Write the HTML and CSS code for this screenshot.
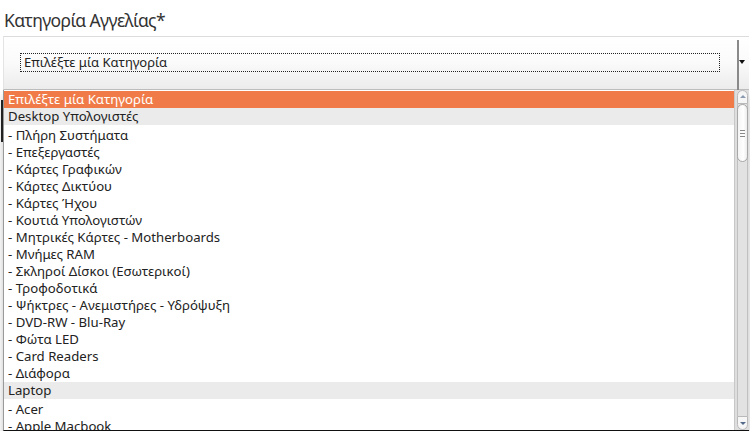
FILE: index.html
```html
<!DOCTYPE html>
<html lang="el">
<head>
<meta charset="utf-8">
<link rel="stylesheet" href="styles.css">
</head>
<body>
<div class="field">
  <div class="label">Κατηγορία Αγγελίας*</div>
  <div class="select">
    <div class="focus">Επιλέξτε μία Κατηγορία</div>
    <div class="arrow"></div>
  </div>
  <div class="dropdown">
    <div class="list">
      <div class="opt selected">Επιλέξτε μία Κατηγορία</div>
      <div class="group">Desktop Υπολογιστές</div>
      <div class="opt">- Πλήρη Συστήματα</div>
      <div class="opt">- Επεξεργαστές</div>
      <div class="opt">- Κάρτες Γραφικών</div>
      <div class="opt">- Κάρτες Δικτύου</div>
      <div class="opt">- Κάρτες Ήχου</div>
      <div class="opt">- Κουτιά Υπολογιστών</div>
      <div class="opt">- Μητρικές Κάρτες - Motherboards</div>
      <div class="opt">- Μνήμες RAM</div>
      <div class="opt">- Σκληροί Δίσκοι (Εσωτερικοί)</div>
      <div class="opt">- Τροφοδοτικά</div>
      <div class="opt">- Ψήκτρες - Ανεμιστήρες - Υδρόψυξη</div>
      <div class="opt">- DVD-RW - Blu-Ray</div>
      <div class="opt">- Φώτα LED</div>
      <div class="opt">- Card Readers</div>
      <div class="opt">- Διάφορα</div>
      <div class="group">Laptop</div>
      <div class="opt">- Acer</div>
      <div class="opt">- Apple Macbook</div>
    </div>
    <div class="scrollbar">
      <div class="sb-btn sb-up"></div>
      <div class="sb-track">
        <div class="thumb"><span></span><span></span><span></span></div>
      </div>
      <div class="sb-btn sb-down"></div>
    </div>
  </div>
</div>
</body>
</html>
```

FILE: styles.css
```css
html, body {
  margin: 0;
  padding: 0;
  background: #ffffff;
}
body {
  font-family: "Noto Sans", "DejaVu Sans", sans-serif;
  color: #222;
}
.field {
  padding: 8px 1px 0 3px;
}
.label {
  font-size: 17.5px;
  letter-spacing: -0.6px;
  line-height: 24px;
  color: #333;
  padding-left: 1px;
  margin-bottom: 4px;
}
.select {
  height: 52px;
  border-top: 1px solid #dcdcdc;
  border-left: 1px solid #e4e4e4;
  border-bottom: 1px solid #bdbdbd;
  background: linear-gradient(#ffffff 0%, #fafafa 50%, #ececec 100%);
  display: flex;
  align-items: center;
  padding-left: 16px;
  position: relative;
}
.focus {
  height: 19px;
  border: 1px dotted #222;
  font-size: 13px;
  line-height: 17px;
  padding-left: 3px;
  box-sizing: border-box;
  width: 700px;
  margin-bottom: 1px;
}
.select::after {
  content: "";
  position: absolute;
  right: 10px;
  top: 3px;
  bottom: -1px;
  width: 2px;
  background: #8a8a8a;
}
.arrow {
  margin-left: auto;
  margin-right: 4px;
  width: 0;
  height: 0;
  border-left: 3px solid transparent;
  border-right: 3px solid transparent;
  border-top: 4px solid #111;
  margin-bottom: 2px;
}
.dropdown {
  height: 340px;
  display: flex;
  border-left: 1px solid #9a9a9a;
  border-bottom: 1px solid #111;
  box-shadow: 0 5px 6px rgba(0,0,0,0.14), 0 12px 10px rgba(0,0,0,0.1);
  background: #fff;
  position: relative;
}
.dropdown::before {
  content: "";
  position: absolute;
  left: -3px;
  top: 10px;
  height: 42px;
  width: 2px;
  background: #222;
}
.list {
  flex: 1;
  overflow: hidden;
  font-size: 13.2px;
  padding-top: 1px;
}
.opt {
  height: 17px;
  line-height: 17px;
  padding-left: 4px;
  white-space: nowrap;
  color: #222;
}
.opt.selected {
  background: #f07b48;
  color: #fff;
}
.group {
  height: 17px;
  line-height: 17px;
  padding-left: 4px;
  background: #ebebeb;
  color: #222;
  margin-bottom: 2px;
}
.scrollbar {
  width: 14px;
  background: #dedede;
  border-left: 1px solid #c8c8c8;
  display: flex;
  flex-direction: column;
  align-items: center;
}
.sb-btn {
  width: 11px;
  height: 14px;
  border: 1px solid #b9b9b9;
  background: #f6f6f6;
  position: relative;
  box-sizing: border-box;
}
.sb-up {
  border-radius: 6px 6px 0 0;
}
.sb-down {
  border-radius: 0 0 6px 6px;
}
.sb-up::after, .sb-down::after {
  content: "";
  position: absolute;
  left: 2px;
  width: 0;
  height: 0;
  border-left: 3px solid transparent;
  border-right: 3px solid transparent;
}
.sb-up::after {
  top: 4px;
  border-bottom: 3px solid #8a9ab0;
}
.sb-down::after {
  top: 5px;
  border-top: 3px solid #556a8a;
}
.sb-track {
  flex: 1;
  width: 11px;
  border-left: 1px solid #c0c0c0;
  border-right: 1px solid #c0c0c0;
  box-sizing: border-box;
  background: #e2e2e2;
}
.thumb {
  height: 56px;
  background: linear-gradient(90deg, #f4f4f4, #ffffff 60%, #ececec);
  border: 1px solid #a8a8a8;
  border-radius: 6px;
  margin-left: -1px;
  margin-right: -1px;
  display: flex;
  flex-direction: column;
  align-items: center;
  justify-content: center;
  gap: 2px;
}
.thumb span {
  display: block;
  width: 5px;
  height: 1px;
  background: #888;
}
```
